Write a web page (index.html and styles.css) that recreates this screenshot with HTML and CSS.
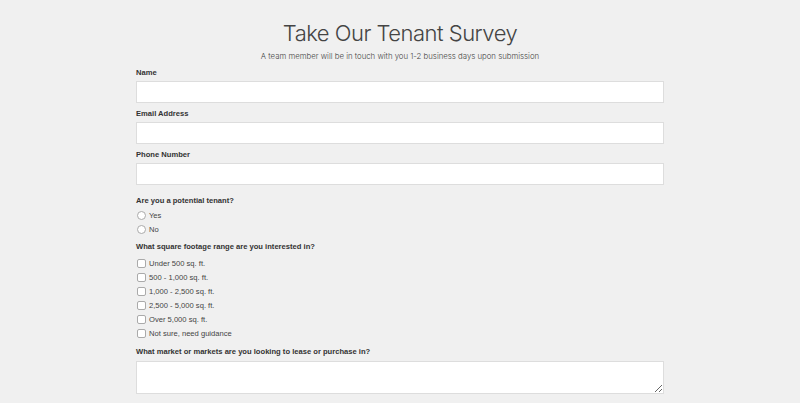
FILE: index.html
```html
<!DOCTYPE html>
<html lang="en">
<head>
  <meta charset="UTF-8" />
  <meta name="viewport" content="width=device-width, initial-scale=1.0"/>
  <title>Take Our Tenant Survey</title>
  <link rel="stylesheet" href="styles.css">
</head>
<body>

  <div class="survey">
    <h1>Take Our Tenant Survey</h1>
    <p class="intro">A team member will be in touch with you 1-2 business days upon submission</p>

    <form id="surveyForm">

      <div class="field">
        <label for="name">Name</label>
        <input type="text" id="name" name="name">
      </div>

      <div class="field">
        <label for="email">Email Address</label>
        <input type="email" id="email" name="email">
      </div>

      <div class="field">
        <label for="phone">Phone Number</label>
        <input type="tel" id="phone" name="phone">
      </div>

      <div class="group tenant">
        <p class="question">Are you a potential tenant?</p>
        <label class="option"><input type="radio" name="tenant" value="yes"> Yes</label>
        <label class="option"><input type="radio" name="tenant" value="no"> No</label>
      </div>

      <div class="group footage">
        <p class="question">What square footage range are you interested in?</p>
        <label class="option"><input type="checkbox" name="sqft" value="under500"> Under 500 sq. ft.</label>
        <label class="option"><input type="checkbox" name="sqft" value="500-1000"> 500 - 1,000 sq. ft.</label>
        <label class="option"><input type="checkbox" name="sqft" value="1000-2500"> 1,000 - 2,500 sq. ft.</label>
        <label class="option"><input type="checkbox" name="sqft" value="2500-5000"> 2,500 - 5,000 sq. ft.</label>
        <label class="option"><input type="checkbox" name="sqft" value="over5000"> Over 5,000 sq. ft.</label>
        <label class="option"><input type="checkbox" name="sqft" value="unsure"> Not sure, need guidance</label>
      </div>

      <div class="field markets">
        <label for="markets">What market or markets are you looking to lease or purchase in?</label>
        <textarea id="markets" name="markets"></textarea>
      </div>

    </form>
  </div>

</body>
</html>
```

FILE: styles.css
```css
body { margin: 0; background: #f0f0f0; color: #333; font-family: "Liberation Sans", Arial, sans-serif; }
.survey { width: 528px; margin: 0 auto; padding-top: 18px; }

h1 { margin: 0; font-family: Inter, sans-serif; font-weight: 300; font-size: 22px; letter-spacing: -0.5px; line-height: 30px; text-align: center; color: #444; }
.intro { margin: 2px 0 0; font-family: Inter, sans-serif; font-weight: 300; font-size: 7.8px; line-height: 12px; text-align: center; color: #444; }

form { margin-top: 6px; }

.field { margin-bottom: 6px; }
.field label, .question { display: block; margin: 0 0 3px; font-size: 7.6px; font-weight: bold; line-height: 10px; color: #333; }
.field input, .field textarea { display: block; box-sizing: border-box; width: 100%; height: 22px; margin: 0; border: 1px solid #ddd; background: #fff; font: inherit; }
.field textarea { height: 33px; resize: vertical; }

.group { margin-top: 11px; }
.tenant .question { margin-bottom: 2px; }
.footage { margin-top: 6px; }
.footage .question { margin-bottom: 4px; }
.markets { margin-top: 7px; }
.markets label { margin-bottom: 4px; }

.option { display: flex; align-items: center; gap: 3px; height: 14px; font-size: 7.6px; color: #444; }
.option input { appearance: none; margin: 0 0 0 1px; width: 9px; height: 9px; border: 1px solid #aaa; background: #fff; box-sizing: border-box; }
.option input[type="radio"] { border-radius: 50%; }
.option input[type="checkbox"] { border-radius: 2px; }
```
